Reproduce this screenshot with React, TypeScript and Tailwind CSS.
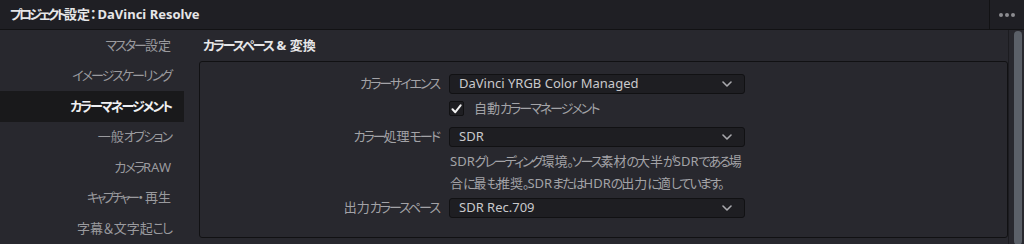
import { useState, type ReactNode } from 'react';

const navItems: { label: string; node?: ReactNode }[] = [
  { label: 'マスター設定' },
  { label: 'イメージスケーリング' },
  { label: 'カラーマネージメント' },
  { label: '一般オプション' },
  { label: 'カメラRAW' },
  {
    label: 'キャプチャー・再生',
    node: (
      <>
        <span className="tracking-[-3.4px]">キャプチャー</span>
        <span className="px-[1px]">・</span>
        再生
      </>
    ),
  },
  { label: '字幕＆文字起こし' },
];

// かなは元画面のフォントよりも幅が広いので字間を詰める
function J({ children }: { children: string }) {
  const parts = children.split(/([\u3040-\u30ff\u3000-\u303f]+)/);
  const out: ReactNode[] = parts.map((p, i) =>
    /[\u3040-\u30ff\u3000-\u303f]/.test(p) ? (
      <span key={i} className="tracking-[-2px]">
        {p}
      </span>
    ) : (
      p
    )
  );
  return <>{out}</>;
}

function Chevron() {
  return (
    <svg width="10" height="6" viewBox="0 0 10 6" fill="none">
      <path d="M1 1l4 4 4-4" stroke="#a9a9ad" strokeWidth="1.6" strokeLinecap="round" strokeLinejoin="round" />
    </svg>
  );
}

function Select({ value }: { value: string }) {
  return (
    <div className="flex h-[20px] w-[296px] items-center justify-between rounded-[3px] border border-[#111113] bg-[#1e1e22] pl-[9px] pr-[12px] text-[13px] text-[#c9c9cc]">
      <span>{value}</span>
      <Chevron />
    </div>
  );
}

export default function App() {
  const [active, setActive] = useState(2);
  const [auto, setAuto] = useState(true);

  return (
    <div
      className="h-[244px] w-[1024px] overflow-hidden bg-[#28282e] text-[13px] [font-feature-settings:'palt']"
      style={{ fontFamily: '"Noto Sans", "Noto Sans CJK JP", sans-serif' }}
    >
      {/* タイトルバー */}
      <div className="flex h-[30px] items-stretch border-b border-[#121214] bg-[#1f1f24]">
        <div className="flex flex-1 items-center pl-[10px] text-[13px] font-bold text-[#e6e6e8]">
          <span className="tracking-[-3px]">プロジェクト</span>
          <span>設定</span>
          <span className="pr-[1px]">：</span>
          DaVinci Resolve
        </div>
        <div className="flex w-[35px] items-center justify-center gap-[2px] border-l border-[#121214]">
          <span className="h-[4px] w-[4px] rounded-full bg-[#8c8c90]" />
          <span className="h-[4px] w-[4px] rounded-full bg-[#8c8c90]" />
          <span className="h-[4px] w-[4px] rounded-full bg-[#8c8c90]" />
        </div>
      </div>

      <div className="flex h-[214px]">
        {/* サイドバー */}
        <div className="flex w-[184px] flex-col">
          {navItems.map((item, i) => (
            <div
              key={item.label}
              onClick={() => setActive(i)}
              className={
                'flex h-[30.5px] shrink-0 cursor-pointer items-center justify-end pr-[13px] text-[13px] ' +
                (active === i ? 'bg-[#19191b] font-bold text-[#f0f0f2]' : 'text-[#9a9a9e]')
              }
            >
              {item.node ?? <J>{item.label}</J>}
            </div>
          ))}
        </div>

        {/* コンテンツ */}
        <div className="flex flex-1 flex-col pl-[15px]">
          <div className="flex h-[31px] items-center pl-[4px] text-[13px] font-bold text-[#e6e6e8]">
            <J>カラースペース</J>&nbsp;&amp;&nbsp;<J>変換</J>
          </div>
          <div className="h-[177px] w-[809px] rounded-[3px] border border-[#111113] pt-[12px]">
            <div className="grid grid-cols-[240px_296px] items-center gap-x-[9px] text-[#a3a3a7]">
              <div className="pr-[1px] text-right">
                <J>カラーサイエンス</J>
              </div>
              <Select value="DaVinci YRGB Color Managed" />

              <div />
              <div
                className="mt-[7px] flex h-[15px] cursor-pointer items-center gap-[10px]"
                onClick={() => setAuto(!auto)}
              >
                <span className="flex h-[15px] w-[15px] items-center justify-center rounded-[2px] border border-[#111113] bg-[#1e1e22]">
                  {auto && (
                    <svg width="11" height="10" viewBox="0 0 11 10" fill="none">
                      <path d="M1.5 5.2l2.8 3L9.6 1.4" stroke="#f2f2f2" strokeWidth="2" strokeLinecap="round" strokeLinejoin="round" />
                    </svg>
                  )}
                </span>
                <span>
                  <J>自動カラーマネージメント</J>
                </span>
              </div>

              <div className="mt-[11px] pr-[1px] text-right">
                <J>カラー処理モード</J>
              </div>
              <div className="mt-[11px]">
                <Select value="SDR" />
              </div>

              <div />
              <div className="mt-[3px] whitespace-nowrap pl-[1px] leading-[22px]">
                <J>SDRグレーディング環境。ソース素材の大半がSDRである場</J>
                <br />
                <J>合に最も推奨。SDRまたはHDRの出力に適しています。</J>
              </div>

              <div className="mt-[4px] pr-[1px] text-right">
                <J>出力カラースペース</J>
              </div>
              <div className="mt-[4px]">
                <Select value="SDR Rec.709" />
              </div>
            </div>
          </div>
        </div>

        {/* スクロールバー */}
        <div className="flex w-[16px] justify-center border-l border-[#1c1c20] pl-[2px]">
          <div className="mt-[1px] h-full w-[8px] rounded-[4px] bg-[#5b6068]" />
        </div>
      </div>
    </div>
  );
}
